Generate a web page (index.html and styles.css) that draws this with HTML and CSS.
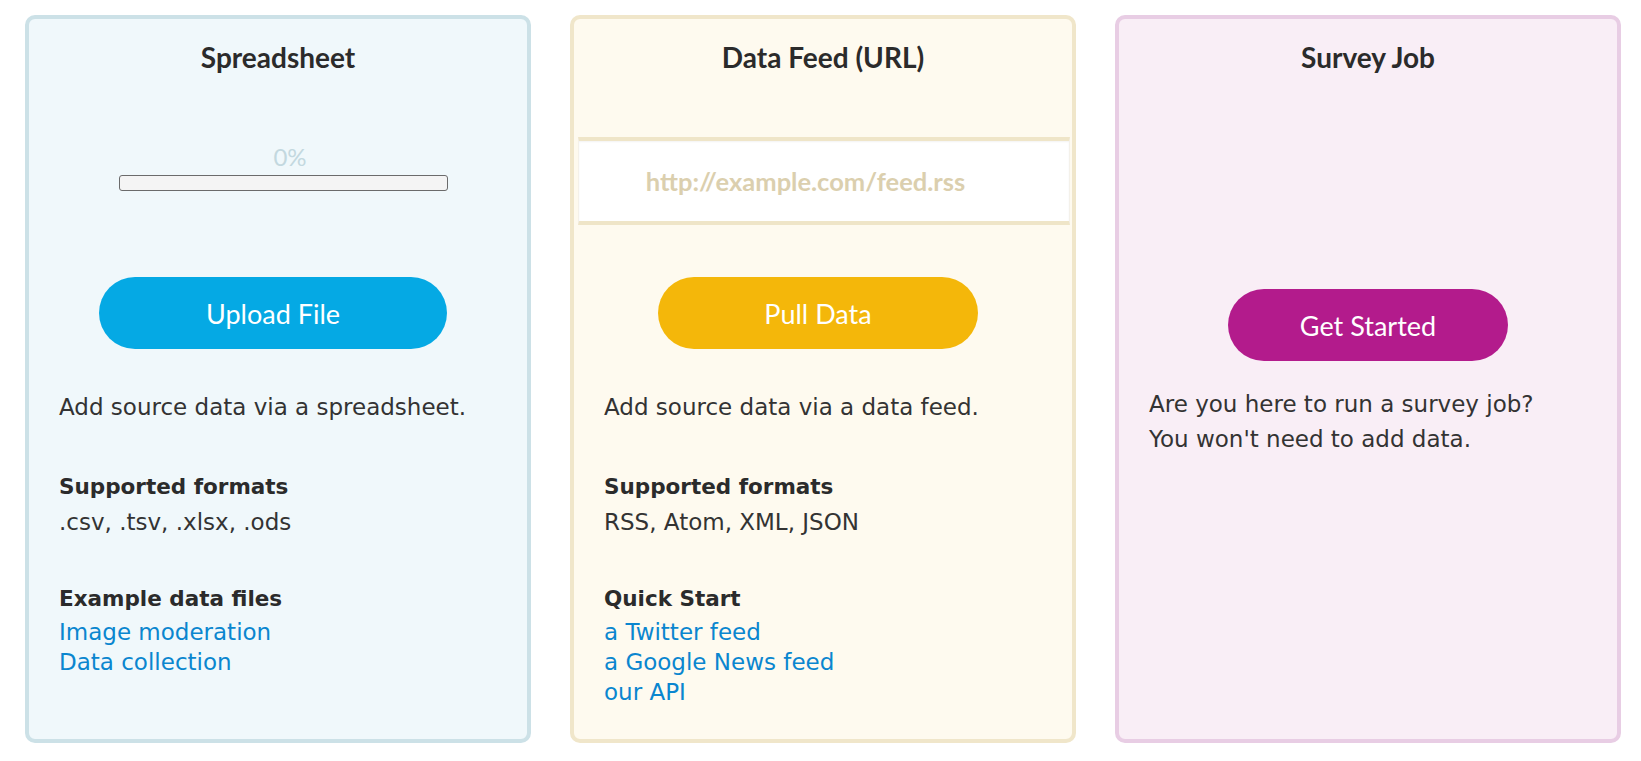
FILE: index.html
```html
<!DOCTYPE html>
<html lang="en">
<head>
<meta charset="utf-8">
<title>Add data</title>
<link rel="stylesheet" href="styles.css">
</head>
<body>
<main class="cards">
  <section class="card card-sheet">
    <h2 class="card-title">Spreadsheet</h2>
    <div class="card-widget">
      <div class="progress-label">0%</div>
      <div class="progress"></div>
    </div>
    <div class="card-action shifted">
      <button class="btn btn-blue" type="button">Upload File</button>
    </div>
    <div class="card-body">
      <p class="desc">Add source data via a spreadsheet.</p>
      <h3 class="info-title">Supported formats</h3>
      <p class="info-text">.csv, .tsv, .xlsx, .ods</p>
      <h3 class="info-title second">Example data files</h3>
      <ul class="links">
        <li><a href="#">Image moderation</a></li>
        <li><a href="#">Data collection</a></li>
      </ul>
    </div>
  </section>

  <section class="card card-feed">
    <h2 class="card-title">Data Feed (URL)</h2>
    <div class="card-widget">
      <input class="feed-input" type="text" placeholder="http://example.com/feed.rss">
    </div>
    <div class="card-action shifted">
      <button class="btn btn-yellow" type="button">Pull Data</button>
    </div>
    <div class="card-body">
      <p class="desc">Add source data via a data feed.</p>
      <h3 class="info-title">Supported formats</h3>
      <p class="info-text">RSS, Atom, XML, JSON</p>
      <h3 class="info-title second">Quick Start</h3>
      <ul class="links">
        <li><a href="#">a Twitter feed</a></li>
        <li><a href="#">a Google News feed</a></li>
        <li><a href="#">our API</a></li>
      </ul>
    </div>
  </section>

  <section class="card card-survey">
    <h2 class="card-title">Survey Job</h2>
    <div class="card-widget tall"></div>
    <div class="card-action">
      <button class="btn btn-magenta" type="button">Get Started</button>
    </div>
    <div class="card-body">
      <p class="survey-text">Are you here to run a survey job?<br>You won't need to add data.</p>
    </div>
  </section>
</main>
</body>
</html>
```

FILE: styles.css
```css
* { box-sizing: border-box; }

html, body {
  margin: 0;
  background: #ffffff;
}

body {
  font-family: "DejaVu Sans", "Liberation Sans", sans-serif;
  color: #333333;
}

.cards {
  display: grid;
  grid-template-columns: repeat(3, 506px);
  column-gap: 39px;
  padding: 15px 0 0 25px;
}

.card {
  height: 728px;
  border: 4px solid;
  border-radius: 10px;
  padding: 20px 30px;
  display: flex;
  flex-direction: column;
}

.card-sheet { background: #f0f8fb; border-color: #cce1e7; }
.card-feed { background: #fefaef; border-color: #f0e6ca; }
.card-survey { background: #f9eef6; border-color: #e8cde4; }

.card-title {
  margin: 0;
  text-align: center;
  font-family: Lato, "Liberation Sans", sans-serif;
  font-weight: 700;
  font-size: 28px;
  line-height: 36px;
  color: #2b2b2b;
}

.card-widget {
  height: 202px;
  display: flex;
  flex-direction: column;
}

.card-widget.tall { height: 214px; }

.progress-label {
  margin-top: 67px;
  padding-left: 24px;
  text-align: center;
  font-family: Lato, "Liberation Sans", sans-serif;
  font-weight: 400;
  font-size: 24px;
  line-height: 30px;
  color: #c3d8df;
}

.progress {
  margin-top: 3px;
  margin-left: 60px;
  width: 329px;
  height: 16px;
  border: 1px solid #6b6b6b;
  border-radius: 3px;
  background: #f4f4f4;
}

.feed-input {
  margin: 62px -28px 0 -26px;
  height: 88px;
  border: 0;
  border-top: 4px solid #efe5c8;
  border-bottom: 4px solid #efe5c8;
  border-left: 1px solid #f4f1ea;
  border-right: 1px solid #f4f1ea;
  background: #ffffff;
  box-shadow: inset 0 1px 2px rgba(0, 0, 0, 0.05);
  padding: 0 37px 0 0;
  text-align: center;
  font-family: Lato, "Liberation Sans", sans-serif;
  font-weight: 700;
  font-size: 25.5px;
  color: #333;
  outline: none;
}

.feed-input::placeholder {
  color: #dbcfae;
  opacity: 1;
}

.card-action {
  display: flex;
  justify-content: center;
}

.card-action.shifted { padding-right: 10px; }

.btn {
  height: 72px;
  border: 0;
  border-radius: 36px;
  color: #ffffff;
  font-family: Lato, "Liberation Sans", sans-serif;
  font-weight: 400;
  font-size: 27px;
  padding: 0;
  cursor: pointer;
}

.btn-blue { width: 348px; background: #05a9e4; }
.btn-yellow { width: 320px; background: #f4b70a; }
.btn-magenta { width: 280px; background: #b31b8c; }

.card-body {
  font-size: 23px;
  line-height: 30px;
}

.desc {
  margin: 43px 0 0;
}

.info-title {
  margin: 50px 0 0;
  font-size: 21.5px;
  font-weight: 700;
  line-height: 30px;
  color: #2b2b2b;
}

.info-title.second { margin-top: 47px; }

.info-text {
  margin: 5px 0 0;
}

.links {
  list-style: none;
  margin: 3px 0 0;
  padding: 0;
}

.links a {
  color: #0a86cf;
  text-decoration: none;
}

.survey-text {
  margin: 26px 0 0;
  line-height: 35px;
}
```
